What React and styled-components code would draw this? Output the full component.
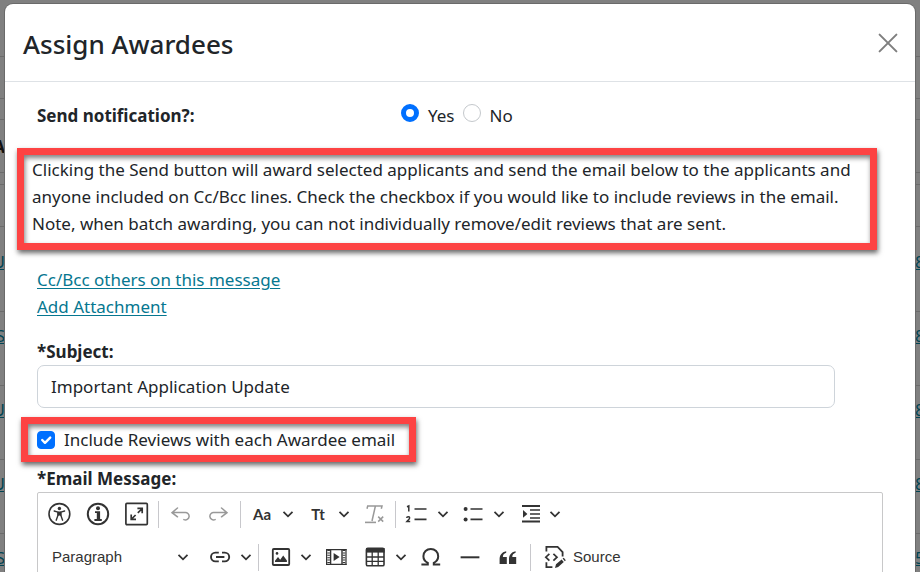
import React from "react";
import styled, { createGlobalStyle, css } from "styled-components";

const GlobalStyle = createGlobalStyle`
  * { box-sizing: border-box; }
  body {
    margin: 0;
    background: #808080;
    color: #212529;
    font-family: "Noto Sans", "Open Sans", sans-serif;
    font-size: 17px;
    line-height: 27px;
  }
  button, input, select { font: inherit; color: inherit; }
`;

const Screen = styled.div`
  position: relative;
  height: 100vh;
  overflow: hidden;
`;

const Page = styled.div`
  position: absolute;
  inset: 0;
  color: #004453;
`;

const PageRow = styled.div`
  display: flex;
  justify-content: space-between;
  align-items: flex-end;
  height: ${(p) => p.$height}px;
  padding-bottom: ${(p) => (p.$height > 50 ? 36 : 0)}px;
  border-bottom: 1px solid #6b6b6b;
`;

const HeadRow = styled(PageRow)`
  padding-bottom: 12px;
  font-weight: 700;
`;

const PageCell = styled.span`
  display: flex;
  justify-content: ${(p) => (p.$end ? "flex-end" : "flex-start")};
  width: 5px;
  overflow: hidden;
  text-decoration: ${(p) => (p.$dark ? "none" : "underline")};
  color: ${(p) => (p.$dark ? "#111" : "#004453")};
`;

const Dialog = styled.section`
  position: relative;
  min-height: 100%;
  margin: 4px 5px 0;
  background: #fff;
  border-radius: 8px 8px 0 0;
  box-shadow: 0 0 0 1px #6a6a6a;
`;

const DialogHeader = styled.header`
  display: flex;
  align-items: center;
  justify-content: space-between;
  height: 78px;
  padding: 0 17px 0 18px;
  border-bottom: 1px solid #dee2e6;
`;

const Title = styled.h1`
  margin: 0;
  padding-top: 2px;
  font-size: 26px;
  line-height: 36px;
  font-weight: 500;
`;

const CloseButton = styled.button`
  display: flex;
  padding: 0;
  border: 0;
  background: none;
  color: #7f7f7f;
`;

const DialogBody = styled.form`
  padding: 20px 32px 0;
`;

const NotifyRow = styled.fieldset`
  display: grid;
  grid-template-columns: 364px auto 1fr;
  margin: 0;
  padding: 0;
  border: 0;
`;

const FieldName = styled.span`
  font-weight: 700;
`;

const Choice = styled.label`
  display: flex;
  align-items: center;
  gap: 9px;
  margin-right: 8px;
`;

const Radio = styled.input`
  appearance: none;
  width: 18px;
  height: 18px;
  margin: 0 0 5px;
  border: 1px solid #c4c8cc;
  border-radius: 50%;
  &:checked { border: 5px solid #0070ff; }
`;

const highlight = css`
  border: 7px solid #fd4343;
  box-shadow: 1px 3px 5px rgba(0, 0, 0, 0.6), inset 1px 3px 5px rgba(0, 0, 0, 0.5);
`;

const Notice = styled.p`
  ${highlight}
  margin: 19px 6px 16px -20px;
  padding: 1px 4px 6px 8px;
`;

const Links = styled.nav`
  display: flex;
  flex-direction: column;
  align-items: flex-start;
`;

const TextLink = styled.a`
  color: #067790;
  text-underline-offset: 2px;
`;

const FieldLabel = styled.label`
  display: block;
  margin-top: ${(p) => p.$gap}px;
  font-weight: 700;
`;

const SubjectBox = styled.div`
  display: flex;
  margin-right: 48px;
`;

const SubjectInput = styled.input`
  flex: 1;
  height: 43px;
  padding: 0 13px;
  border: 1px solid #ced4da;
  border-radius: 7px;
  background: #fff;
`;

const IncludeBox = styled.label`
  ${highlight}
  display: flex;
  align-items: center;
  gap: 9px;
  width: fit-content;
  height: 45px;
  margin: 9px 0 0 -16px;
  padding: 0 14px 0 9px;
`;

const Tick = styled.span`
  display: grid;
  > * { grid-area: 1 / 1; }
  svg { pointer-events: none; }
`;

const Checkbox = styled.input`
  appearance: none;
  width: 18px;
  height: 18px;
  margin: 0;
  border: 1px solid #ced4da;
  border-radius: 4px;
  &:checked { border-color: #0070ff; background: #0070ff; }
`;

const Editor = styled.div`
  display: flex;
  flex-direction: column;
  gap: 5px;
  min-height: 160px;
  padding: 2px;
  border: 1px solid #c8c8c9;
  border-radius: 2px 2px 0 0;
  color: #333;
  font-family: "Liberation Sans", Arial, sans-serif;
  font-size: 15px;
`;

const ToolRow = styled.div`
  display: flex;
  align-items: center;
  gap: 1px;
  height: 38px;
`;

const Divider = styled.span`
  width: 1px;
  height: 27px;
  margin: 0 1px;
  background: #c8c8cc;
`;

const Tool = styled.button`
  display: flex;
  align-items: center;
  justify-content: center;
  width: 38px;
  height: 38px;
  padding: 0;
  border: 0;
  background: none;
  &:disabled { color: #999; }
`;

const DropTool = styled(Tool)`
  width: 55px;
  justify-content: flex-start;
`;

const ToolFace = styled.span`
  display: flex;
  justify-content: center;
  width: 38px;
  font-family: Lato, sans-serif;
  font-weight: 700;
`;

const SourceTool = styled(Tool)`
  width: auto;
  gap: 6px;
  padding: 0 10px;
`;

const ToolText = styled.span`
  padding-bottom: 2px;
`;

const StylePicker = styled.div`
  display: grid;
  align-items: center;
  width: 160px;
  > * { grid-area: 1 / 1; }
  svg { justify-self: end; margin-right: 10px; pointer-events: none; }
`;

const StyleSelect = styled.select`
  appearance: none;
  height: 38px;
  padding: 0 12px 2px;
  border: 0;
  background: none;
`;

const Svg = ({ size = 24, children, width = 1.6 }) => (
  <svg
    width={size}
    height={size}
    viewBox={`0 0 ${size} ${size}`}
    fill="none"
    stroke="currentColor"
    strokeWidth={width}
    aria-hidden="true"
  >
    {children}
  </svg>
);

const Chevron = () => (
  <Svg size={14} width={1.8}>
    <path d="M2.5 4.8 7 9.3l4.5-4.5" />
  </Svg>
);

const icons = {
  accessibility: (
    <Svg>
      <circle cx="12.4" cy="12" r="10.4" />
      <circle cx="12.4" cy="6.5" r="1.7" fill="currentColor" stroke="none" />
      <path d="M7.2 9 11 10.2v3l-1.8 5M17.6 9l-3.8 1.2v3l1.8 5" strokeWidth="1.4" strokeLinecap="round" />
      <path d="M10.4 9.5h4v4.4l-2-.4-2 .4z" fill="currentColor" stroke="none" />
    </Svg>
  ),
  info: (
    <Svg>
      <circle cx="12" cy="12" r="10.2" strokeWidth="2" />
      <circle cx="12" cy="6.2" r="2" fill="currentColor" stroke="none" />
      <path d="M9 10.2h4.2v7.4M8.4 18h7.4" strokeWidth="1.8" />
      <path d="M10.8 10h2.8v8h-2.8z" fill="currentColor" stroke="none" />
    </Svg>
  ),
  maximize: (
    <Svg>
      <rect x="0.9" y="1.4" width="21.4" height="21.2" rx="1" strokeWidth="1.7" />
      <path d="m6.6 17 4-4M12.8 10.8 16.8 7M12.4 6.4h4.8v4.8M6.2 12.6v4.8H11" strokeWidth="1.7" />
    </Svg>
  ),
  undo: (
    <Svg width={1.5}>
      <path d="M9.5 6 4 10.6l5.5 4.2M4.4 10.6h12.3a3.7 3.7 0 1 1-.8 7" strokeLinecap="round" />
    </Svg>
  ),
  redo: (
    <Svg width={1.5}>
      <path d="M14.5 6 20 10.6l-5.5 4.2M19.6 10.6H7.3a3.7 3.7 0 1 0 .8 7" strokeLinecap="round" />
    </Svg>
  ),
  clear: (
    <Svg>
      <path d="M5 6.8 5.7 4H20l-.7 2.8M13.4 4 10 19M16.2 14.6l5 5m0-5-5 5" strokeWidth="1.5" />
      <path d="M3 20.4h11" strokeWidth="1.6" />
    </Svg>
  ),
  numbered: (
    <Svg>
      <path d="M9.5 7h12M9.5 17.4h12" strokeWidth="1.7" />
      <path d="M2 4.8 3.8 4v5.4M1.6 15.8c.2-1.4 3-1.6 3 .1 0 1.3-1.6 2.2-2.8 3.7h3.4" strokeWidth="1.5" />
    </Svg>
  ),
  bullets: (
    <Svg>
      <path d="M9.5 7h12M9.5 17.4h12" strokeWidth="1.7" />
      <circle cx="4.6" cy="7" r="2" fill="currentColor" stroke="none" />
      <circle cx="4.6" cy="17.4" r="2" fill="currentColor" stroke="none" />
    </Svg>
  ),
  indent: (
    <Svg>
      <path d="M5 4h18M5 19.6h18" strokeWidth="2" />
      <path d="M13 8h10M13 12h10M13 16h10" strokeWidth="1.5" />
      <path d="M6 8v7.8l4.4-3.9z" fill="currentColor" stroke="none" />
    </Svg>
  ),
  link: (
    <Svg width={1.9}>
      <path d="M10.8 7.6H7.4a4.4 4.4 0 0 0 0 8.8h3.4M14 7.6h2.8a4.4 4.4 0 0 1 0 8.8H14M8 12h8.4" />
    </Svg>
  ),
  image: (
    <Svg>
      <rect x="4.8" y="4" width="16.4" height="16" rx="1" strokeWidth="1.8" />
      <circle cx="9" cy="8.4" r="1.3" fill="currentColor" stroke="none" />
      <path d="M7 17v-1.2l3-3.8 2.2 2.7 3-4.1 3.7 5V17z" fill="currentColor" stroke="none" />
    </Svg>
  ),
  media: (
    <Svg>
      <path d="M2 4.6h20.6M2 19.4h20.6M6.6 4v15.4M18 4v15.4" strokeWidth="1.4" />
      <path d="M2.6 4v16M22 4v16" strokeWidth="1.2" />
      <path d="M4.6 5v15M20 5v15" strokeWidth="2.6" strokeDasharray="1 1.4" />
      <path d="M9.6 8v8l6-4z" fill="currentColor" stroke="none" />
    </Svg>
  ),
  table: (
    <Svg>
      <rect x="3.4" y="3.4" width="17.6" height="17.4" rx="1.4" strokeWidth="1.6" />
      <path d="M3 3h18.6v4.6H3z" fill="currentColor" stroke="none" />
      <path d="M3.4 12h17.6M3.4 16.4h17.6M9.2 7v14M15.2 7v14" strokeWidth="1.3" />
    </Svg>
  ),
  omega: (
    <Svg>
      <path
        d="M2.4 19.6h6.4v-1.8C6 16.4 4.4 14 4.4 11.2 4.4 7 7.6 4 11.8 4s7.4 3 7.4 7.2c0 2.8-1.6 5.2-4.4 6.6v1.8h6.4"
        strokeWidth="2"
      />
    </Svg>
  ),
  rule: (
    <Svg>
      <path d="M2.6 12.3h18.8" strokeWidth="2" />
    </Svg>
  ),
  quote: (
    <Svg>
      <path
        d="M2.6 19v-4.6c0-4.2 1.9-7.2 6.6-8.2v1.6c-2.4.8-3.4 2.2-3.3 4.2h3.9v7zM12 19v-4.6c0-4.2 1.9-7.2 6.6-8.2v1.6c-2.4.8-3.4 2.2-3.3 4.2h3.9v7z"
        fill="currentColor"
        stroke="none"
      />
    </Svg>
  ),
  source: (
    <Svg width={1.8}>
      <path d="M3.4 6.4V1.9h11.2l5 5.2v4.4M3.4 17.2v5h6" />
      <path d="m6.4 8.8-3.6 3.4 3.6 3.4M10.4 8.8l3.6 3.4-3.6 3.4" strokeWidth="1.7" />
      <path d="m12 23 1-3.7 5.6-4.9 2.2 2.6-5.6 4.9zM19.6 13.6l1.2-.8 2 2.4-1 1z" fill="currentColor" stroke="none" />
    </Svg>
  ),
};

const IconTool = ({ icon, label, disabled }) => (
  <Tool type="button" aria-label={label} disabled={disabled}>
    {icons[icon]}
  </Tool>
);

const MenuTool = ({ icon, text, label }) => (
  <DropTool type="button" aria-label={label} aria-haspopup="true">
    <ToolFace>{icon ? icons[icon] : text}</ToolFace>
    <Chevron />
  </DropTool>
);

const spacerRows = [57, 42, 21];

const pageRows = [
  { height: 12 },
  { height: 42 },
  { height: 85, left: "U", right: "8" },
  { height: 74, left: "S", right: "8" },
  { height: 74, left: "U", right: "8" },
  { height: 74, left: "U", right: "8" },
  { height: 74, left: "S", right: "5" },
];

export default function App() {
  return (
    <>
      <GlobalStyle />
      <Screen>
        <Page aria-hidden="true">
          {spacerRows.map((height) => (
            <HeadRow key={height} $height={height} />
          ))}
          <HeadRow $height={53}>
            <PageCell $end $dark>A</PageCell>
          </HeadRow>
          {pageRows.map((row, i) => (
            <PageRow key={i} $height={row.height}>
              <PageCell $end>{row.left}</PageCell>
              <PageCell>{row.right}</PageCell>
            </PageRow>
          ))}
        </Page>
        <Dialog role="dialog" aria-labelledby="dialog-title">
          <DialogHeader>
            <Title id="dialog-title">Assign Awardees</Title>
            <CloseButton type="button" aria-label="Close">
              <Svg size={20} width={2}>
                <path d="m1.6 1.6 16.8 16.8M18.4 1.6 1.6 18.4" strokeLinecap="round" />
              </Svg>
            </CloseButton>
          </DialogHeader>
          <DialogBody>
            <NotifyRow aria-labelledby="notify-name">
              <FieldName id="notify-name">Send notification?:</FieldName>
              <Choice>
                <Radio type="radio" name="notify" defaultChecked />
                Yes
              </Choice>
              <Choice>
                <Radio type="radio" name="notify" />
                No
              </Choice>
            </NotifyRow>
            <Notice>
              Clicking the Send button will award selected applicants and send the email below to the applicants and
              anyone included on Cc/Bcc lines. Check the checkbox if you would like to include reviews in the email.
              Note, when batch awarding, you can not individually remove/edit reviews that are sent.
            </Notice>
            <Links>
              <TextLink href="#cc">Cc/Bcc others on this message</TextLink>
              <TextLink href="#attach">Add Attachment</TextLink>
            </Links>
            <FieldLabel htmlFor="subject" $gap={18}>*Subject:</FieldLabel>
            <SubjectBox>
              <SubjectInput id="subject" type="text" defaultValue="Important Application Update" />
            </SubjectBox>
            <IncludeBox>
              <Tick>
                <Checkbox type="checkbox" defaultChecked />
                <svg width="18" height="18" viewBox="0 0 18 18" fill="none" stroke="#fff" strokeWidth="2.4" aria-hidden="true">
                  <path d="m5.2 9 2.8 2.8 5.2-5.2" strokeLinecap="round" strokeLinejoin="round" />
                </svg>
              </Tick>
              Include Reviews with each Awardee email
            </IncludeBox>
            <FieldLabel as="div" id="message-name" $gap={3}>*Email Message:</FieldLabel>
            <Editor role="group" aria-labelledby="message-name">
              <ToolRow>
                <IconTool icon="accessibility" label="Accessibility help" />
                <IconTool icon="info" label="Information" />
                <IconTool icon="maximize" label="Maximize" />
                <Divider />
                <IconTool icon="undo" label="Undo" disabled />
                <IconTool icon="redo" label="Redo" disabled />
                <Divider />
                <MenuTool text="Aa" label="Font family" />
                <MenuTool text="Tt" label="Font size" />
                <IconTool icon="clear" label="Remove format" disabled />
                <Divider />
                <MenuTool icon="numbered" label="Numbered list" />
                <MenuTool icon="bullets" label="Bulleted list" />
                <MenuTool icon="indent" label="Indent" />
              </ToolRow>
              <ToolRow>
                <StylePicker>
                  <StyleSelect aria-label="Paragraph style">
                    <option>Paragraph</option>
                  </StyleSelect>
                  <Chevron />
                </StylePicker>
                <MenuTool icon="link" label="Link" />
                <Divider />
                <MenuTool icon="image" label="Image" />
                <IconTool icon="media" label="Insert media" />
                <MenuTool icon="table" label="Insert table" />
                <IconTool icon="omega" label="Special characters" />
                <IconTool icon="rule" label="Horizontal line" />
                <IconTool icon="quote" label="Block quote" />
                <Divider />
                <SourceTool type="button">
                  {icons.source}
                  <ToolText>Source</ToolText>
                </SourceTool>
              </ToolRow>
            </Editor>
          </DialogBody>
        </Dialog>
      </Screen>
    </>
  );
}
